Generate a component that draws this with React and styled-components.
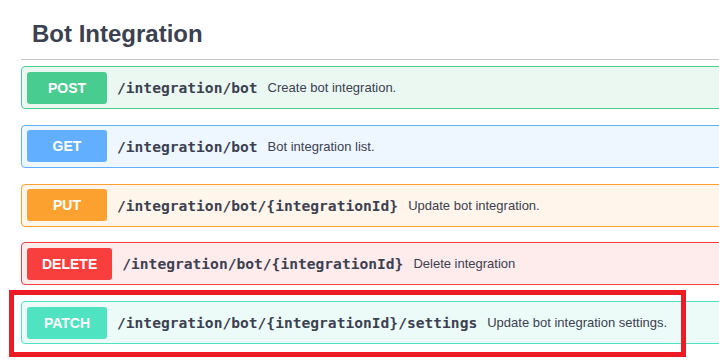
import React from "react";
import styled, { createGlobalStyle } from "styled-components";

const GlobalStyle = createGlobalStyle`
    html, body {
        margin: 0;
        padding: 0;
        background: #fff;
        overflow: hidden;
    }
    body {
        font-family: "Liberation Sans", Arial, sans-serif;
        color: #3b4151;
    }
`;

// colours per http method
const methods = {
    POST: { main: "#49cc90", bg: "#ebf8f2" },
    GET: { main: "#61affe", bg: "#eef6ff" },
    PUT: { main: "#fca130", bg: "#fff5ea" },
    DELETE: { main: "#f93e3e", bg: "#feebeb" },
    PATCH: { main: "#50e3c2", bg: "#edfbf8" }
};

const Page = styled.div`
    width: 780px;
    margin-left: 21px;
`;

const TagTitle = styled.h4`
    margin: 0 0 6px;
    padding: 19px 0 10px 11px;
    font-size: 24px;
    line-height: 30px;
    font-weight: 700;
    color: #3b4151;
    border-bottom: 1px solid #c6c8cc;
`;

const OpBlock = styled.div`
    position: relative;
    display: flex;
    align-items: center;
    box-sizing: border-box;
    height: 43px;
    padding: 0 5px;
    margin-bottom: 15.75px;
    border: 1px solid ${(p) => p.$main};
    border-radius: 4px;
    background: ${(p) => p.$bg};
`;

const Method = styled.span`
    box-sizing: border-box;
    min-width: 80px;
    height: 32px;
    padding: 0 15px;
    display: flex;
    align-items: center;
    justify-content: center;
    border-radius: 3px;
    background: ${(p) => p.$main};
    color: #fff;
    font-size: 14px;
    font-weight: 700;
`;

const Path = styled.span`
    padding: 0 10px;
    font-family: "DejaVu Sans Mono", "Liberation Mono", monospace;
    font-size: 14.6px;
    font-weight: 700;
    color: #3b4151;
    white-space: nowrap;
`;

const Description = styled.span`
    font-size: 13px;
    color: #3b4151;
    white-space: nowrap;
`;

const Highlight = styled.div`
    position: absolute;
    left: -13px;
    top: -12px;
    width: 677px;
    height: 67px;
    box-sizing: border-box;
    border: 5px solid #ed1c24;
    pointer-events: none;
`;

const operations = [
    { method: "POST", path: "/integration/bot", summary: "Create bot integration." },
    { method: "GET", path: "/integration/bot", summary: "Bot integration list." },
    { method: "PUT", path: "/integration/bot/{integrationId}", summary: "Update bot integration." },
    { method: "DELETE", path: "/integration/bot/{integrationId}", summary: "Delete integration" },
    { method: "PATCH", path: "/integration/bot/{integrationId}/settings", summary: "Update bot integration settings.", marked: true }
];

export default function App() {
    return (
        <>
            <GlobalStyle />
            <Page>
                <TagTitle>Bot Integration</TagTitle>
                {operations.map((op, index) => {
                    const c = methods[op.method];
                    return (
                        <OpBlock key={index} $main={c.main} $bg={c.bg}>
                            <Method $main={c.main}>{op.method}</Method>
                            <Path>{op.path}</Path>
                            <Description>{op.summary}</Description>
                            {op.marked && <Highlight />}
                        </OpBlock>
                    );
                })}
            </Page>
        </>
    );
}
